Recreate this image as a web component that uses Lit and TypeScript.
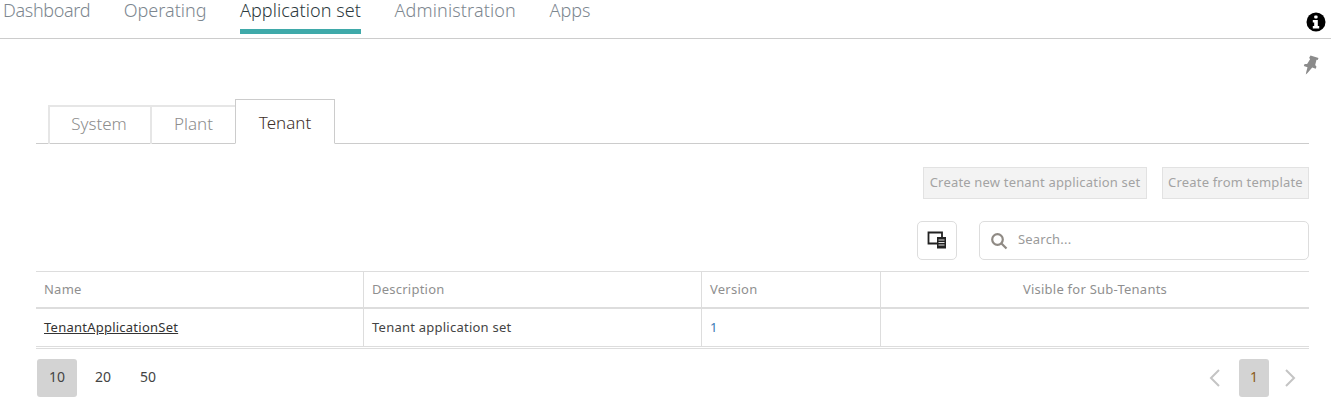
import { LitElement, html, css, svg } from "lit";
import { customElement } from "lit/decorators.js";

@customElement("app-root")
export class AppRoot extends LitElement {
  static styles = css`
    :host { display: block; width: 1331px; height: 403px; overflow: hidden; background: #fff; font-family: "Noto Sans", "Open Sans", sans-serif; color: #333; }
    * { box-sizing: border-box; }
    .top { height: 39px; border-bottom: 1px solid #ccc; display: flex; position: relative; padding-left: 3px; gap: 33.5px; }
    .nav { height: 34px; font-size: 18px; font-weight: 300; color: #7d8790; line-height: 20px; border-bottom: 5px solid transparent; white-space: nowrap; }
    .nav.n0 { letter-spacing: -0.33px; }
    .nav.n2 { letter-spacing: 0.07px; }
    .nav.n3 { letter-spacing: 0.14px; }
    .nav.on { color: #2d3a40; border-bottom-color: #3fa9a9; }
    .info { position: absolute; left: 1306px; top: 12px; }
    .pinrow { height: 60px; display: flex; justify-content: flex-end; padding: 16px 12px 0 0; }
    .tabs { margin: 0 22px 0 36px; height: 45px; padding-left: 12px; border-bottom: 1px solid #ccc; display: flex; align-items: flex-end; }
    .tab { height: 39px; margin-bottom: -1px; border: 2px solid #e6e6e6; border-bottom: none; border-right-width: 0; font-size: 17px; font-weight: 300; color: #8d8d8d; display: flex; align-items: center; justify-content: center; padding-bottom: 4px; }
    .tab.s { width: 102px; padding-right: 2px; }
    .tab.p { width: 85px; border-right: 0; }
    .tab.t { width: 100px; height: 45px; border: 1px solid #ccc; border-bottom: 1px solid #fff; color: #40302a; padding: 2px 0 0; }
    .actions { display: flex; justify-content: flex-end; gap: 15px; margin: 23px 22px 0 0; }
    .btn { height: 32px; background: #f3f3f3; border: 1px solid #e2e2e2; font-size: 13px; letter-spacing: 0.18px; color: #a3a3a3; display: flex; align-items: center; justify-content: center; white-space: nowrap; padding-bottom: 2px; }
    .btn.a { width: 224px; }
    .btn.b { width: 147px; }
    .tools { display: flex; justify-content: flex-end; gap: 22px; margin: 22px 22px 0 0; }
    .icon { width: 40px; height: 39px; border: 1px solid #ddd; border-radius: 5px; display: flex; align-items: center; justify-content: center; padding-bottom: 2px; }
    .search { width: 330px; height: 39px; border: 1px solid #ddd; border-radius: 5px; display: flex; align-items: center; padding: 0 0 3px 10px; gap: 10px; font-size: 13px; letter-spacing: 0.2px; color: #9a9a9a; }
    .search svg { margin-top: 3px; }
    .table { margin: 11px 22px 0 36px; display: grid; grid-template-columns: 328px 338px 179px 428px; border-top: 1px solid #ddd; border-bottom: 1px solid #ddd; padding-bottom: 1px; }
    .cell { font-size: 13px; letter-spacing: 0.24px; padding-left: 8px; display: flex; align-items: center; border-right: 1px solid #ddd; white-space: nowrap; }
    .cell:nth-child(4n) { border-right: 0; }
    .head { height: 37px; border-bottom: 2px solid #ddd; color: #8f8f8f; padding-bottom: 2px; }
    .body { height: 38px; border-bottom: 1px solid #ddd; color: #444; padding-bottom: 1px; }
    .center { justify-content: center; padding-left: 0; }
    .link { color: #333; text-decoration: underline; }
    .num { color: #3a78b5; }
    .pager { display: flex; justify-content: space-between; margin: 10px 22px 0 37px; }
    .sizes, .pages { display: flex; align-items: center; }
    .sizes { gap: 5px; }
    .sizes .on { margin-right: 1px; }
    .pg { width: 40px; height: 38px; border-radius: 3px; font-size: 14px; color: #444; display: flex; align-items: center; justify-content: center; padding-bottom: 4px; }
    .pg.on { background: #d3d3d3; }
    .pages .pg { width: 30px; color: #8a5a20; }
    .chev { display: flex; width: 40px; justify-content: center; }
    .chev.l { padding-right: 8px; }
    .chev.r { padding-left: 2px; }
  `;

  render() {
    const navs = ["Dashboard", "Operating", "Application set", "Administration", "Apps"];
    return html`
      <div class="top">
        ${navs.map((n, i) => html`<div class="nav n${i} ${i === 2 ? "on" : ""}">${n}</div>`)}
        <svg class="info" width="20" height="20" viewBox="0 0 20 20">
          <circle cx="10" cy="10" r="9.5" fill="#000"/>
          <rect x="8.2" y="3.5" width="3.4" height="3" rx="1" fill="#fff"/>
          <path d="M6.8 8h5v6h1.4v2.4H6.800V14h1.400v-3.600H6.800z" fill="#fff"/>
        </svg>
      </div>
      <div class="pinrow">
        <svg width="16" height="20" viewBox="0 0 16 20">
          <path d="M7.500 .5l8 2.500-.8 2-1.200-.2-1.300 5.200 1.300 1.800-.8 2-3.500-1.200L4.500 18 2.800 19.500l.4-2.300 1.300-5L.8 11l.8-2 2.500-.1 3-4.600-.9-1.500z" fill="#8b8b8b"/>
        </svg>
      </div>
      <div class="tabs">
        <div class="tab s">System</div>
        <div class="tab p">Plant</div>
        <div class="tab t">Tenant</div>
      </div>
      <div class="actions">
        <div class="btn a">Create new tenant application set</div>
        <div class="btn b">Create from template</div>
      </div>
      <div class="tools">
        <div class="icon">
          <svg width="20" height="18" viewBox="0 0 20 18">
            <path d="M1.500 1.500h13.500v11H1.500z" fill="#fff" stroke="#222" stroke-width="1.800"/>
            <rect x="10" y="6" width="9" height="11.500" fill="#222"/>
            <path d="M11.500 9h6M11.500 11.500h6M11.500 14h6" stroke="#ddd" stroke-width="1"/>
          </svg>
        </div>
        <div class="search">
          <svg width="18" height="18" viewBox="0 0 18 18" fill="none" stroke="#8f8a84" stroke-width="2.200">
            <circle cx="7.500" cy="7.500" r="5.300"/>
            <path d="M11.500 11.500l5 5"/>
          </svg>
          <span>Search...</span>
        </div>
      </div>
      <div class="table">
        <div class="cell head">Name</div>
        <div class="cell head">Description</div>
        <div class="cell head">Version</div>
        <div class="cell head center">Visible for Sub-Tenants</div>
        <div class="cell body"><span class="link">TenantApplicationSet</span></div>
        <div class="cell body">Tenant application set</div>
        <div class="cell body"><span class="num">1</span></div>
        <div class="cell body"></div>
      </div>
      <div class="pager">
        <div class="sizes">
          <div class="pg on">10</div>
          <div class="pg">20</div>
          <div class="pg">50</div>
        </div>
        <div class="pages">
          <div class="chev l">${this.chevron("M11 2L3 10l8 8")}</div>
          <div class="pg on">1</div>
          <div class="chev r">${this.chevron("M3 2l8 8-8 8")}</div>
        </div>
      </div>
    `;
  }

  chevron(d: string) {
    return html`<svg width="14" height="20" viewBox="0 0 14 20" fill="none" stroke="#c4c4c4" stroke-width="2">${svg`<path d=${d} />`}</svg>`;
  }
}
